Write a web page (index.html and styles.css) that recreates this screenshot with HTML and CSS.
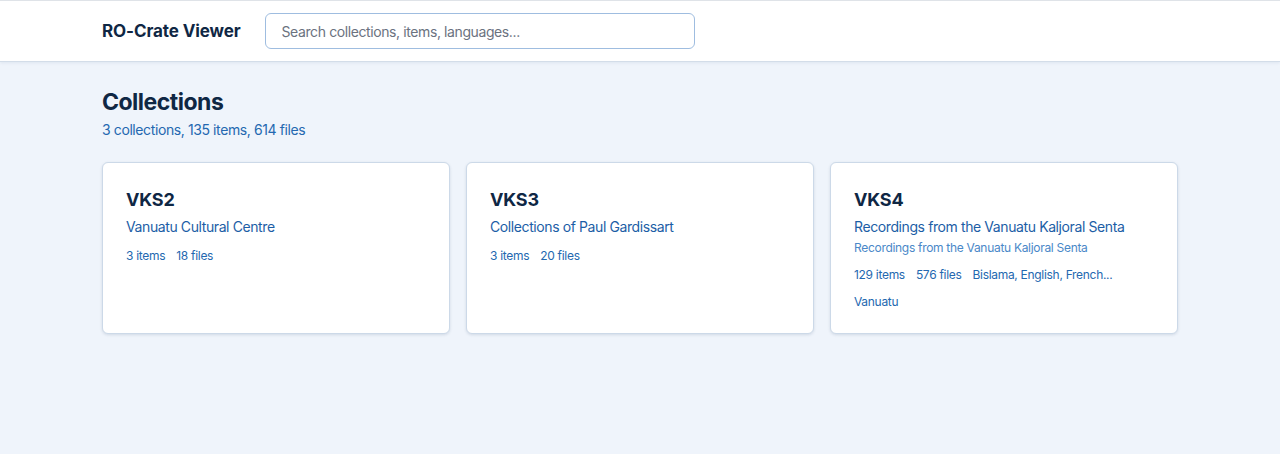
FILE: index.html
```html
<!DOCTYPE html>
<html lang="en">
<head>
    <meta charset="UTF-8">
    <meta name="viewport" content="width=device-width, initial-scale=1.0">
    <title>RO-Crate Viewer</title>
    <link rel="stylesheet" href="styles.css">
</head>
<body>
    <header class="site-header">
        <div class="container header-inner">
            <a href="/" class="brand">RO-Crate Viewer</a>
            <input class="search" type="search" placeholder="Search collections, items, languages...">
        </div>
    </header>

    <main class="container">
        <h1>Collections</h1>
        <p class="summary">3 collections, 135 items, 614 files</p>

        <div class="card-grid">
            <a href="#" class="card">
                <h2>VKS2</h2>
                <div class="card-title">Vanuatu Cultural Centre</div>
                <div class="meta">
                    <span>3 items</span>
                    <span>18 files</span>
                </div>
            </a>

            <a href="#" class="card">
                <h2>VKS3</h2>
                <div class="card-title">Collections of Paul Gardissart</div>
                <div class="meta">
                    <span>3 items</span>
                    <span>20 files</span>
                </div>
            </a>

            <a href="#" class="card">
                <h2>VKS4</h2>
                <div class="card-title">Recordings from the Vanuatu Kaljoral Senta</div>
                <div class="card-desc">Recordings from the Vanuatu Kaljoral Senta</div>
                <div class="meta">
                    <span>129 items</span>
                    <span>576 files</span>
                    <span>Bislama, English, French...</span>
                    <span>Vanuatu</span>
                </div>
            </a>
        </div>
    </main>
</body>
</html>
```

FILE: styles.css
```css
* {
    margin: 0;
    padding: 0;
    box-sizing: border-box;
}

body {
    font-family: Inter, 'Noto Sans', sans-serif;
    background: #eff4fb;
    color: #0f2744;
    min-height: 100vh;
    border-top: 1px solid #dfe3e8;
}

.container {
    max-width: 1076px;
    margin: 0 auto;
}

.site-header {
    background: #fff;
    border-bottom: 1px solid #d3dde9;
    box-shadow: 0 1px 3px rgba(30, 60, 100, 0.08);
}

.header-inner {
    display: flex;
    align-items: center;
    gap: 24px;
    padding: 12px 0;
}

.brand {
    font-size: 17px;
    font-weight: 700;
    color: #0f2744;
    text-decoration: none;
    letter-spacing: -0.1px;
}

.search {
    width: 430px;
    height: 36px;
    padding: 0 16px;
    border: 1px solid #9fbde0;
    border-radius: 6px;
    font-family: inherit;
    font-size: 14px;
    letter-spacing: -0.4px;
    color: #333;
    outline: none;
}

.search::placeholder {
    color: #6b7280;
}

main {
    padding-top: 26px;
}

h1 {
    font-size: 23px;
    font-weight: 700;
    letter-spacing: -0.5px;
    line-height: 28px;
}

.summary {
    margin-top: 5px;
    font-size: 14px;
    letter-spacing: -0.4px;
    color: #2468b0;
}

.card-grid {
    display: grid;
    grid-template-columns: repeat(3, 1fr);
    gap: 16px;
    margin-top: 24px;
}

.card {
    display: block;
    background: #fff;
    border: 1px solid #ccd9e8;
    border-radius: 6px;
    box-shadow: 0 1px 3px rgba(30, 60, 100, 0.14);
    padding: 25px 23px 21px;
    text-decoration: none;
    min-height: 170px;
}

.card h2 {
    font-size: 18px;
    font-weight: 700;
    letter-spacing: -0.2px;
    color: #0f2744;
    line-height: 24px;
}

.card-title {
    margin-top: 5px;
    font-size: 14px;
    letter-spacing: -0.4px;
    color: #1c5ea6;
    line-height: 20px;
}

/* short description under the title, only some collections have one */
.card-desc {
    margin-top: 2px;
    margin-bottom: -1px;
    font-size: 12px;
    letter-spacing: -0.3px;
    color: #4a88c8;
    line-height: 18px;
}

.meta {
    display: flex;
    flex-wrap: wrap;
    column-gap: 11px;
    row-gap: 7px;
    margin-top: 9px;
    font-size: 12px;
    letter-spacing: -0.3px;
    color: #2468b0;
    line-height: 20px;
}
```
